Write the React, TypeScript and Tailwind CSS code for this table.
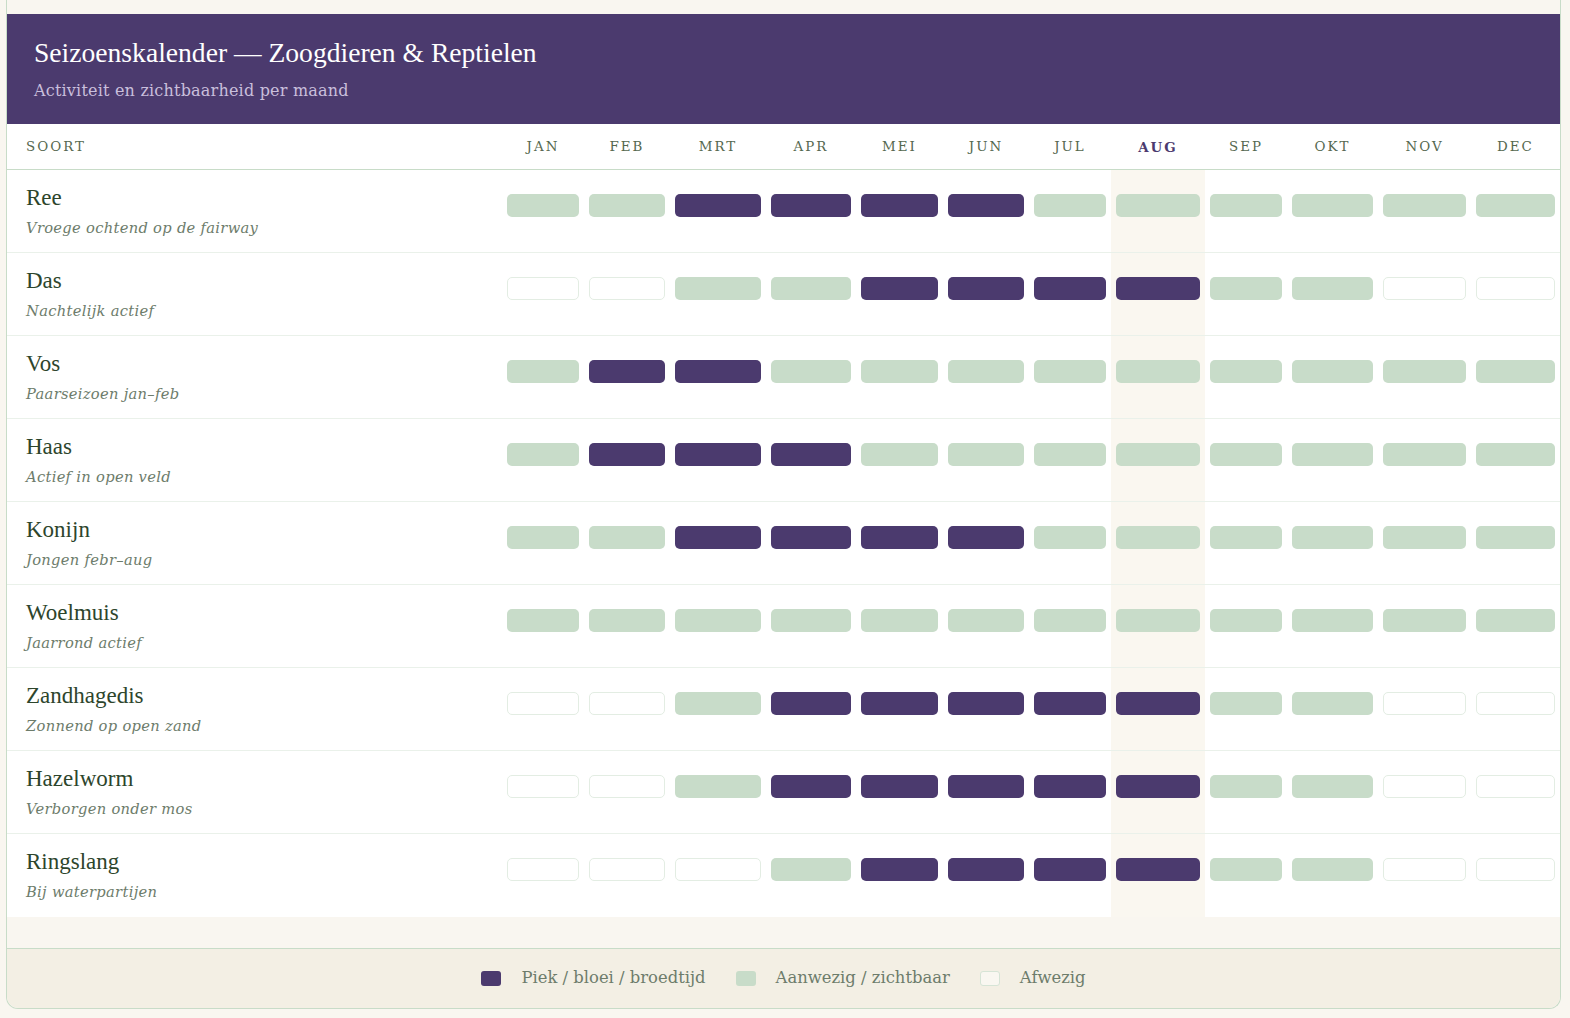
import React from 'react';

type Level = 'p' | 'g' | 'e';

const months = ['JAN', 'FEB', 'MRT', 'APR', 'MEI', 'JUN', 'JUL', 'AUG', 'SEP', 'OKT', 'NOV', 'DEC'];
const currentMonth = 7;

const species: { name: string; note: string; months: Level[] }[] = [
  { name: 'Ree', note: 'Vroege ochtend op de fairway', months: ['g', 'g', 'p', 'p', 'p', 'p', 'g', 'g', 'g', 'g', 'g', 'g'] },
  { name: 'Das', note: 'Nachtelijk actief', months: ['e', 'e', 'g', 'g', 'p', 'p', 'p', 'p', 'g', 'g', 'e', 'e'] },
  { name: 'Vos', note: 'Paarseizoen jan–feb', months: ['g', 'p', 'p', 'g', 'g', 'g', 'g', 'g', 'g', 'g', 'g', 'g'] },
  { name: 'Haas', note: 'Actief in open veld', months: ['g', 'p', 'p', 'p', 'g', 'g', 'g', 'g', 'g', 'g', 'g', 'g'] },
  { name: 'Konijn', note: 'Jongen febr–aug', months: ['g', 'g', 'p', 'p', 'p', 'p', 'g', 'g', 'g', 'g', 'g', 'g'] },
  { name: 'Woelmuis', note: 'Jaarrond actief', months: ['g', 'g', 'g', 'g', 'g', 'g', 'g', 'g', 'g', 'g', 'g', 'g'] },
  { name: 'Zandhagedis', note: 'Zonnend op open zand', months: ['e', 'e', 'g', 'p', 'p', 'p', 'p', 'p', 'g', 'g', 'e', 'e'] },
  { name: 'Hazelworm', note: 'Verborgen onder mos', months: ['e', 'e', 'g', 'p', 'p', 'p', 'p', 'p', 'g', 'g', 'e', 'e'] },
  { name: 'Ringslang', note: 'Bij waterpartijen', months: ['e', 'e', 'e', 'g', 'p', 'p', 'p', 'p', 'g', 'g', 'e', 'e'] },
];

const cols =
  'grid grid-cols-[495px_82px_86px_96px_90px_87px_86px_82px_94px_82px_91px_93px_89px]';

const pillClass: Record<Level, string> = {
  p: 'bg-[#4b3a6e]',
  g: 'bg-[#c8dcc9]',
  e: 'bg-white border border-[#e3ede3]',
};

function Pill({ level }: { level: Level }) {
  return <div className={`h-[23px] rounded-[5px] ${pillClass[level]}`} />;
}

export default function App() {
  return (
    <div className="min-h-screen bg-[#f9f6f0] pl-[6px] font-['DejaVu_Serif',serif]">
      <div className="w-[1555px] rounded-b-[12px] border-x border-b border-[#c8dcc8] bg-[#f9f6f0] pt-[14px]">
        {/* header */}
        <div className="bg-[#4b3a6e] px-[27px] pt-[21px] pb-[21px]">
          <h1 className="font-['Liberation_Serif',serif] text-[27.6px] leading-[36px] text-white">
            Seizoenskalender — Zoogdieren &amp; Reptielen
          </h1>
          <p className="mt-[8px] text-[16px] leading-[24px] tracking-[0.2px] text-[#c9bfdc]">
            Activiteit en zichtbaarheid per maand
          </p>
        </div>

        {/* table */}
        <div className="bg-white">
          <div className={`${cols} h-[46px] items-center border-b border-[#c8dcc8] pt-[2px] text-[13.4px] tracking-[2px] text-[#55684f]`}>
            <div className="pl-[19px]">SOORT</div>
            {months.map((m, i) => (
              <div
                key={m}
                className={
                  i === currentMonth
                    ? 'text-center font-bold text-[#4b3a6e]'
                    : 'text-center'
                }
              >
                {m}
              </div>
            ))}
          </div>

          {species.map((s, ri) => (
            <div
              key={s.name}
              className={`${cols} h-[83px] ${ri < species.length - 1 ? 'border-b border-[#eaf1ea]' : ''}`}
            >
              <div className="pl-[19px] pt-[14px]">
                <div className="font-['Liberation_Serif',serif] text-[23px] leading-[28px] text-[#2d452c]">
                  {s.name}
                </div>
                <div className="mt-[5px] text-[14.7px] italic leading-[22px] tracking-[0.3px] text-[#6d7c6b]">
                  {s.note}
                </div>
              </div>
              {s.months.map((lv, i) => (
                <div
                  key={i}
                  className={`px-[5px] pt-[24px] ${i === currentMonth ? 'bg-[#faf7f0]' : ''}`}
                >
                  <Pill level={lv} />
                </div>
              ))}
            </div>
          ))}
        </div>

        <div className="h-[31px]" />

        {/* legend */}
        <div className="flex h-[60px] items-center justify-center gap-[30px] rounded-b-[12px] border-t border-[#c8dcc8] bg-[#f3efe4] text-[16.4px] text-[#6d7c6b]">
          <div className="flex items-center gap-[20px]">
            <span className="h-[15px] w-[20px] rounded-[3px] bg-[#4b3a6e]" />
            <span>Piek / bloei / broedtijd</span>
          </div>
          <div className="flex items-center gap-[20px]">
            <span className="h-[15px] w-[20px] rounded-[3px] bg-[#c8dcc9]" />
            <span>Aanwezig / zichtbaar</span>
          </div>
          <div className="flex items-center gap-[20px]">
            <span className="h-[15px] w-[20px] rounded-[3px] border border-[#d6e4d6] bg-[#f9f7f1]" />
            <span>Afwezig</span>
          </div>
        </div>
      </div>
    </div>
  );
}
